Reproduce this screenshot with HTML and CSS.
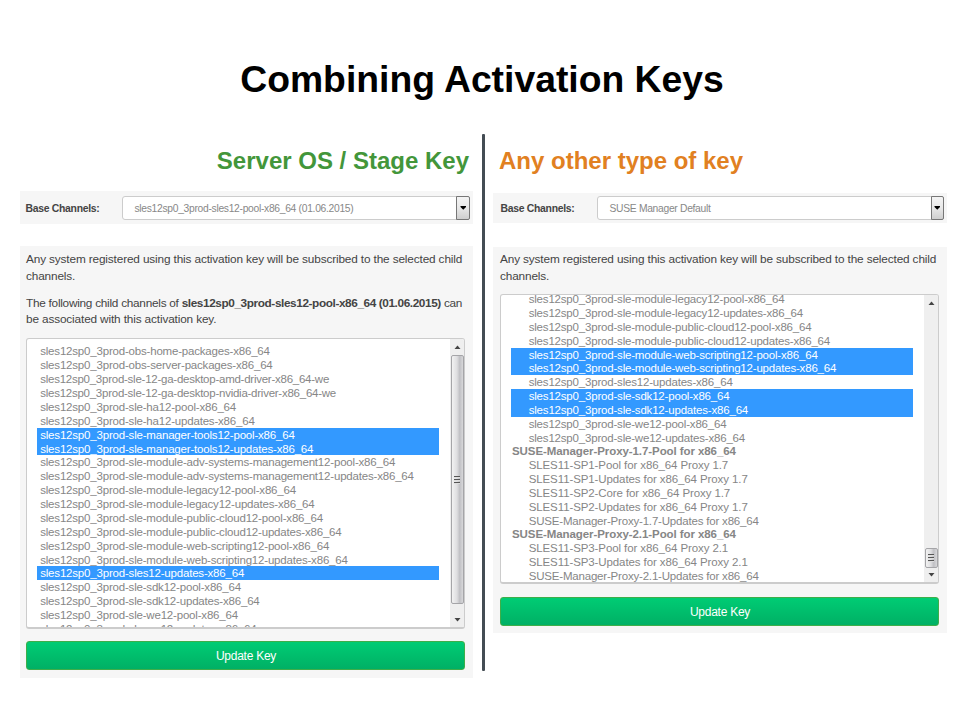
FILE: index.html
```html
<!DOCTYPE html>
<html lang="en">
<head>
<meta charset="utf-8">
<title>Combining Activation Keys</title>
<link rel="stylesheet" href="styles.css">
</head>
<body>
<main class="slide">
  <h1 class="title">Combining Activation Keys</h1>
  <div class="columns">
    <section class="column column-left">
      <h2 class="heading heading-green">Server OS / Stage Key</h2>
      <div class="base">
        <span class="base-label">Base Channels:</span>
        <div class="select"><span class="select-value">sles12sp0_3prod-sles12-pool-x86_64 (01.06.2015)</span><span class="select-button"><svg width="7" height="4" viewBox="0 0 7 4"><path d="M0.5 0h5.5v1l-2.75 2.75l-2.75-2.75z"/></svg></span></div>
      </div>
      <div class="child">
        <p class="text"><span class="line l1">Any system registered using this activation key will be subscribed to the selected child</span><span class="line l2">channels.</span></p>
        <p class="text"><span class="line l3">The following child channels of <b>sles12sp0_3prod-sles12-pool-x86_64 (01.06.2015)</b> can</span><span class="line l4">be associated with this activation key.</span></p>
        <div class="listbox">
          <ul class="options">
            <li>sles12sp0_3prod-obs-home-packages-x86_64</li>
            <li>sles12sp0_3prod-obs-server-packages-x86_64</li>
            <li class="tight">sles12sp0_3prod-sle-12-ga-desktop-amd-driver-x86_64-we</li>
            <li class="tight">sles12sp0_3prod-sle-12-ga-desktop-nvidia-driver-x86_64-we</li>
            <li>sles12sp0_3prod-sle-ha12-pool-x86_64</li>
            <li>sles12sp0_3prod-sle-ha12-updates-x86_64</li>
            <li class="selected">sles12sp0_3prod-sle-manager-tools12-pool-x86_64</li>
            <li class="selected">sles12sp0_3prod-sle-manager-tools12-updates-x86_64</li>
            <li>sles12sp0_3prod-sle-module-adv-systems-management12-pool-x86_64</li>
            <li>sles12sp0_3prod-sle-module-adv-systems-management12-updates-x86_64</li>
            <li>sles12sp0_3prod-sle-module-legacy12-pool-x86_64</li>
            <li>sles12sp0_3prod-sle-module-legacy12-updates-x86_64</li>
            <li>sles12sp0_3prod-sle-module-public-cloud12-pool-x86_64</li>
            <li>sles12sp0_3prod-sle-module-public-cloud12-updates-x86_64</li>
            <li>sles12sp0_3prod-sle-module-web-scripting12-pool-x86_64</li>
            <li>sles12sp0_3prod-sle-module-web-scripting12-updates-x86_64</li>
            <li class="selected">sles12sp0_3prod-sles12-updates-x86_64</li>
            <li>sles12sp0_3prod-sle-sdk12-pool-x86_64</li>
            <li>sles12sp0_3prod-sle-sdk12-updates-x86_64</li>
            <li>sles12sp0_3prod-sle-we12-pool-x86_64</li>
            <li>sles12sp0_3prod-sle-we12-updates-x86_64</li>
          </ul>
          <div class="scrollbar">
            <svg class="arrow" width="7" height="4" viewBox="0 0 7 4"><path d="M0.5 4L3.5 0.5L6.5 4z"/></svg>
            <div class="track"><div class="thumb"><i></i><i></i><i></i></div></div>
            <svg class="arrow" width="7" height="4" viewBox="0 0 7 4"><path d="M0.5 0L3.5 3.5L6.5 0z"/></svg>
          </div>
        </div>
        <button class="update">Update Key</button>
      </div>
    </section>
    <div class="divider"></div>
    <section class="column column-right">
      <h2 class="heading heading-orange">Any other type of key</h2>
      <div class="base">
        <span class="base-label">Base Channels:</span>
        <div class="select"><span class="select-value">SUSE Manager Default</span><span class="select-button"><svg width="7" height="4" viewBox="0 0 7 4"><path d="M0.5 0h5.5v1l-2.75 2.75l-2.75-2.75z"/></svg></span></div>
      </div>
      <div class="child">
        <p class="text"><span class="line l1">Any system registered using this activation key will be subscribed to the selected child</span><span class="line l2">channels.</span></p>
        <div class="listbox">
          <ul class="options">
            <li>sles12sp0_3prod-sle-module-legacy12-pool-x86_64</li>
            <li>sles12sp0_3prod-sle-module-legacy12-updates-x86_64</li>
            <li>sles12sp0_3prod-sle-module-public-cloud12-pool-x86_64</li>
            <li>sles12sp0_3prod-sle-module-public-cloud12-updates-x86_64</li>
            <li class="selected">sles12sp0_3prod-sle-module-web-scripting12-pool-x86_64</li>
            <li class="selected">sles12sp0_3prod-sle-module-web-scripting12-updates-x86_64</li>
            <li>sles12sp0_3prod-sles12-updates-x86_64</li>
            <li class="selected">sles12sp0_3prod-sle-sdk12-pool-x86_64</li>
            <li class="selected">sles12sp0_3prod-sle-sdk12-updates-x86_64</li>
            <li>sles12sp0_3prod-sle-we12-pool-x86_64</li>
            <li>sles12sp0_3prod-sle-we12-updates-x86_64</li>
            <li class="group">SUSE-Manager-Proxy-1.7-Pool for x86_64</li>
            <li class="proxy">SLES11-SP1-Pool for x86_64 Proxy 1.7</li>
            <li class="proxy">SLES11-SP1-Updates for x86_64 Proxy 1.7</li>
            <li class="proxy">SLES11-SP2-Core for x86_64 Proxy 1.7</li>
            <li class="proxy">SLES11-SP2-Updates for x86_64 Proxy 1.7</li>
            <li>SUSE-Manager-Proxy-1.7-Updates for x86_64</li>
            <li class="group">SUSE-Manager-Proxy-2.1-Pool for x86_64</li>
            <li class="proxy">SLES11-SP3-Pool for x86_64 Proxy 2.1</li>
            <li class="proxy">SLES11-SP3-Updates for x86_64 Proxy 2.1</li>
            <li>SUSE-Manager-Proxy-2.1-Updates for x86_64</li>
          </ul>
          <div class="scrollbar">
            <svg class="arrow" width="7" height="4" viewBox="0 0 7 4"><path d="M0.5 4L3.5 0.5L6.5 4z"/></svg>
            <div class="track"><div class="thumb"><i></i><i></i><i></i></div></div>
            <svg class="arrow" width="7" height="4" viewBox="0 0 7 4"><path d="M0.5 0L3.5 3.5L6.5 0z"/></svg>
          </div>
        </div>
        <button class="update">Update Key</button>
      </div>
    </section>
  </div>
</main>
</body>
</html>
```
FILE: styles.css
```css
* { box-sizing: border-box; }
body { margin: 0; background: #fff; font-family: "Liberation Sans", Arial, sans-serif; }
.slide { width: 960px; height: 720px; overflow: hidden; padding: 58px 13px 0 20px; }
.title { margin: 0; padding-right: 3px; height: 76px; text-align: center; font-size: 37.3px; line-height: 43px; color: #000; white-space: nowrap; }
.columns { display: grid; grid-template-columns: 453px 20px 454px; }
.divider { width: 3px; height: 537px; margin-left: 9px; background: #444d54; border-radius: 1px; }
.heading { margin: 0; font-size: 24px; line-height: 28px; padding: 13px 4px 0 6px; white-space: nowrap; }
.heading-green { height: 57px; text-align: right; color: #43963a; }
.heading-orange { height: 59px; color: #e18021; }

.base { display: flex; align-items: center; height: 33px; margin-bottom: 22px; padding: 0 3px 0 5px; background: #f6f6f6; }
.column-right .base { height: 30px; margin-bottom: 24px; padding: 0 3px 0 7px; }
.base-label { width: 97px; padding: 1px 0 0 0.5px; font-size: 10.4px; font-weight: bold; color: #444; letter-spacing: -0.28px; }
.select { flex: 1; height: 24px; display: flex; align-items: center; background: #fff; border: 1px solid #ccc; border-radius: 3px; }
.select-value { flex: 1; padding: 1px 0 0 11.5px; font-size: 10.3px; letter-spacing: -0.3px; color: #888; white-space: nowrap; }
.select-button { width: 13px; height: 24px; margin: -1px; display: flex; align-items: center; justify-content: center; border: 1px solid #777; border-radius: 0 2px 2px 0; background: linear-gradient(#f4f4f4, #e8e8e8 50%, #cfcfcf); }
.column-left .select-button { width: 14px; }

.child { background: #f6f6f6; padding: 5px 8px 8px 6px; }
.column-right .child { padding: 4px 8px 7px 7px; }
.text { margin: 0 0 10.5px; font-size: 11.8px; line-height: 16.5px; color: #444; }
.column-right .text { margin-bottom: 10px; }
.line { display: block; white-space: nowrap; letter-spacing: -0.14px; }
.line.l3 { letter-spacing: -0.26px; }
.line.l3 b { letter-spacing: -0.4px; }

.listbox { display: flex; height: 291px; overflow: hidden; background: #fff; border: 1px solid #ccc; border-bottom-width: 2px; border-radius: 3px; }
.options { flex: 1; min-width: 0; margin: 0; padding: 5.4px 11px 0 10px; list-style: none; font-size: 11.5px; line-height: 13.88px; color: #868686; overflow: hidden; }
.options li { height: 13.88px; padding: 1px 0 0 3.2px; white-space: nowrap; letter-spacing: -0.19px; }
.options .tight { letter-spacing: -0.25px; }
.options .selected { background: #3399ff; color: #fff; }
.column-right .listbox { height: 290px; }
.column-right .options { padding-top: 0; }
.column-right .options li { padding-left: 17.7px; height: 13.84px; line-height: 13.84px; }
.column-right .options li:first-child { margin-top: -2.7px; }
.column-right .options .proxy { letter-spacing: -0.1px; }
.column-right .options .group { padding-left: 1px; font-weight: bold; letter-spacing: -0.08px; }

.scrollbar { width: 14px; display: flex; flex-direction: column; align-items: center; background: #efefef; padding: 6px 0 5px; }
.arrow { flex: none; fill: #444; }
.track { flex: 1; width: 13px; padding: 6px 0 14px; display: flex; }
.thumb { flex: 1; display: flex; flex-direction: column; align-items: center; justify-content: center; gap: 1px; border: 1px solid #a5a5a8; border-radius: 2px; background: linear-gradient(90deg, #f2f2f2, #dedee0 45%, #c0c0c4 70%, #d8d8da); }
.thumb i { width: 6px; height: 2px; border-top: 1px solid #555; background: #ddd; }
.column-right .track { padding: 243px 0 5px; }

.update { display: block; width: 100%; height: 29px; margin-top: 12px; padding: 0 0 0 1px; border: 1px solid #3fae49; border-radius: 3px; background: linear-gradient(#00cc74, #00b065); font: 12px "Liberation Sans", Arial, sans-serif; letter-spacing: -0.25px; color: #fff; }
.column-right .update { margin-top: 13px; }
```
